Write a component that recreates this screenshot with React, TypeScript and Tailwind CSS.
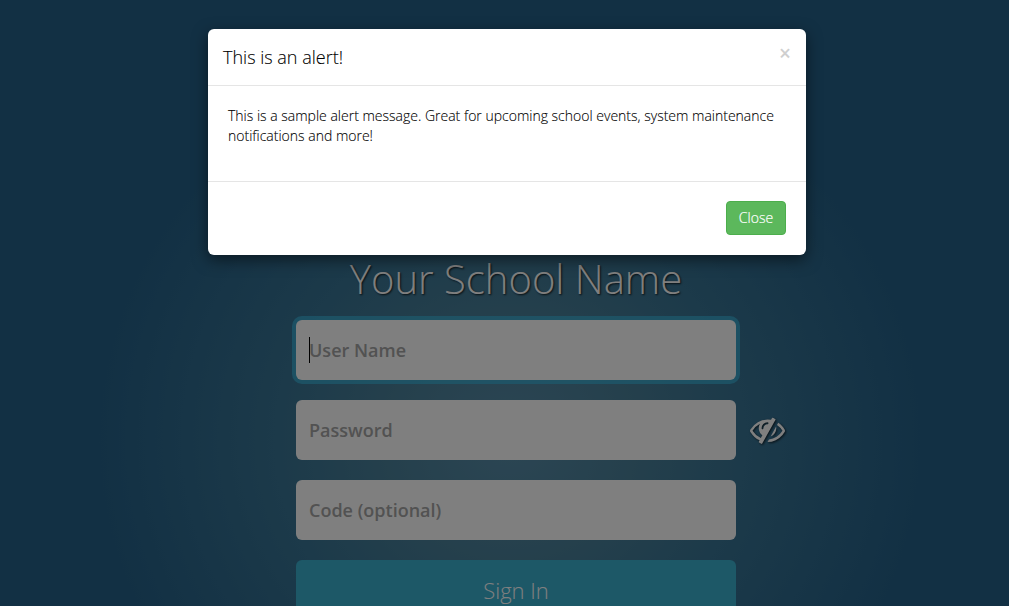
export default function App() {
  const inputClass =
    "h-[60px] w-[440px] rounded-md bg-white px-[13px] text-[18px] font-semibold text-[#555] outline-none placeholder:text-[#a4a4a4] [font-family:'Open_Sans',sans-serif]";
  return (
    <div className="relative h-[606px] w-[1009px] overflow-hidden bg-[radial-gradient(ellipse_420px_400px_at_510px_440px,#588ca8_0%,#4a8099_30%,#387494_56%,#246088_100%)] [font-family:'Open_Sans',sans-serif]">
      <main className="flex flex-col pl-[296px] pt-[255px]">
        <h1 className="w-[440px] text-center text-[40px] font-light leading-[48px] text-white [text-shadow:1px_1px_2px_rgba(0,0,0,0.8)]">
          Your School Name
        </h1>
        <form className="mt-[17px] flex flex-col gap-5">
          <div className="relative w-[440px]">
            <input
              aria-label="User Name"
              placeholder="User Name"
              className={inputClass + " ring-4 ring-[#3ab5dc]/70 ring-offset-0"}
            />
            <span className="absolute left-[13px] top-[17px] h-[26px] w-px bg-black" />
          </div>
          <div className="flex items-center gap-[14px]">
            <input aria-label="Password" placeholder="Password" className={inputClass} />
            <svg viewBox="0 0 2048 1792" className="mb-[2px] h-[35px] w-10 fill-white drop-shadow-[1px_1px_1px_rgba(0,0,0,0.7)]">
              <path d="M555 1335l78-141q-87-63-136-159t-49-203q0-121 61-225-229 117-381 353 167 258 427 375zm389-759q0-20-14-34t-34-14q-125 0-214.5 89.5t-89.5 214.5q0 20 14 34t34 14 34-14 14-34q0-86 61-147t147-61q20 0 34-14t14-34zm363-191q0 7-1 9-106 189-316 567t-315 566l-49 89q-10 16-28 16-12 0-134-70-16-10-16-28 0-12 44-87-143-65-263.5-173t-208.5-245q-20-31-20-69t20-69q153-235 380-371t496-136q89 0 180 17l54-97q10-16 28-16 5 0 18 6t31 15.5 33 18.5 31.5 18.5 19.5 11.5q16 10 16 27zm37 447q0 139-79 253.5t-209 164.5l280-502q8 45 8 84zm448 128q0 35-20 69-39 64-109 145-150 172-347.5 267t-419.5 95l74-132q212-18 392.5-137t301.5-307q-115-179-282-294l63-112q95 64 182.5 153t144.5 184q20 34 20 69z" />
            </svg>
          </div>
          <input aria-label="Code (optional)" placeholder="Code (optional)" className={inputClass} />
          <button type="button" className="h-[60px] w-[440px] rounded-md bg-[#3ab0cf] text-[22px] font-light text-white">
            Sign In
          </button>
        </form>
      </main>

      <div className="absolute inset-0 bg-black/50 pl-[208px] pt-[29px]">
        <div className="w-[598px] rounded-md bg-white text-black shadow-[0_5px_15px_rgba(0,0,0,0.5)]">
          <div className="relative h-[57px] border-b border-[#e5e5e5] pl-[15px] pt-[15px]">
            <h2 className="text-[18px] font-light leading-[27px] [-webkit-text-stroke:0.1px_black]">This is an alert!</h2>
            <span className="absolute right-[15px] top-[14px] text-[21px] font-semibold leading-[21px] text-[#cfcfcf]">×</span>
          </div>
          <div className="h-[96px] border-b border-[#e5e5e5] px-5 pt-5 text-[14px] font-light leading-5 [-webkit-text-stroke:0.1px_black]">
            This is a sample alert message. Great for upcoming school events, system maintenance notifications and more!
          </div>
          <div className="flex h-[73px] justify-end pr-5 pt-[19px]">
            <button type="button" className="h-[34px] w-[60px] rounded border border-[#4cae4c] bg-[#5cb85c] pb-[2px] text-[14px] font-light text-white [-webkit-text-stroke:0.2px_white]">
              Close
            </button>
          </div>
        </div>
      </div>
    </div>
  );
}
